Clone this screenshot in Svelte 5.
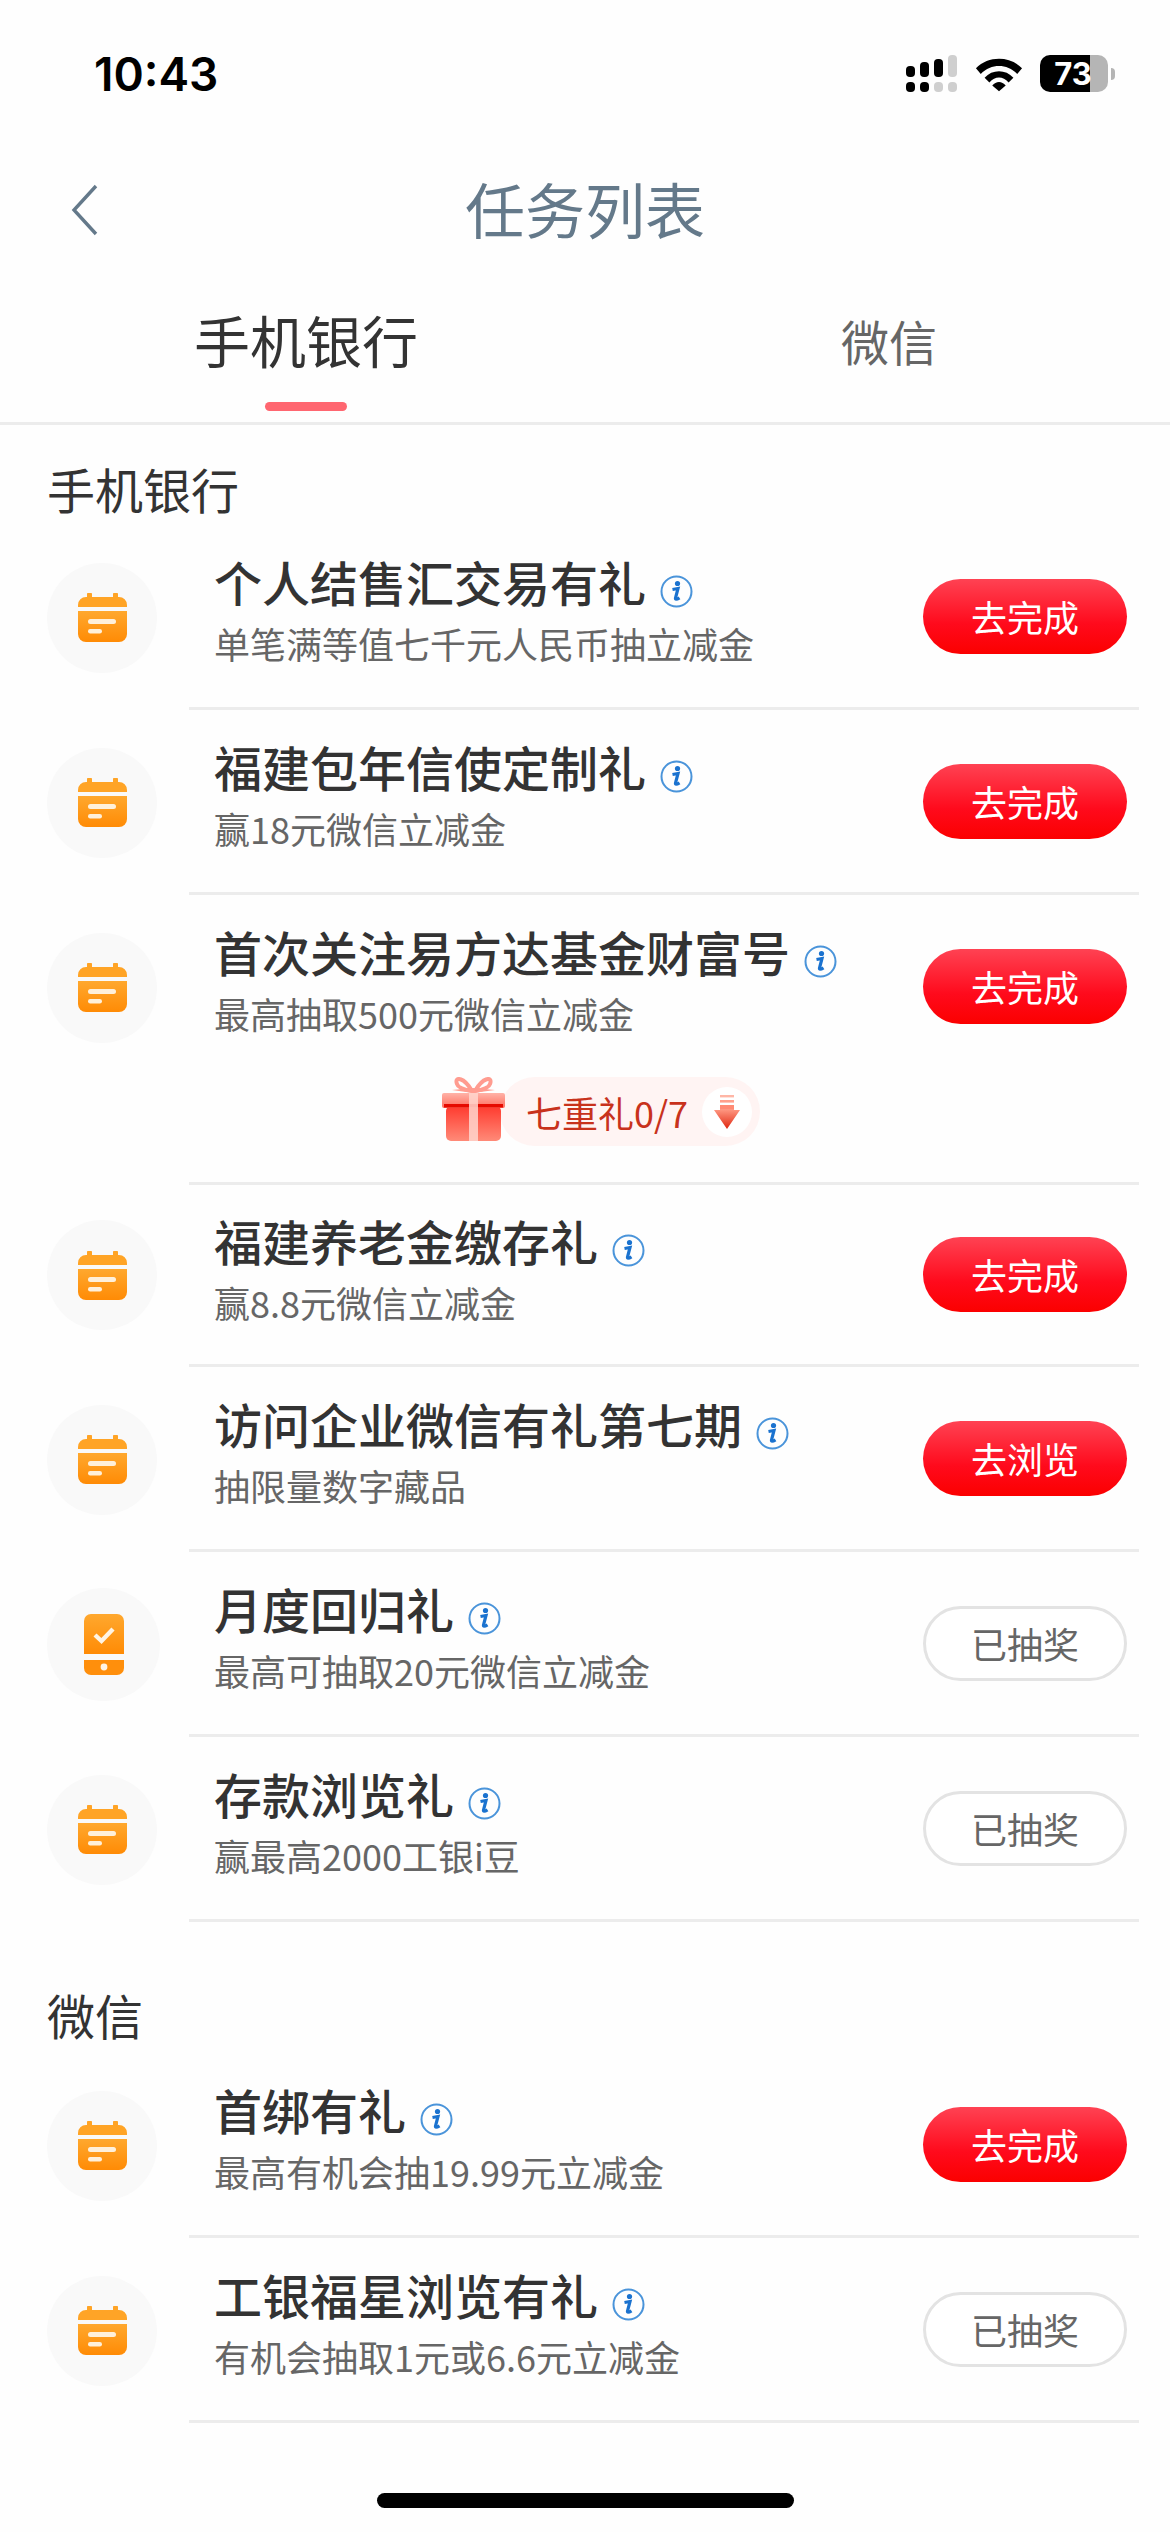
<script>
  const bank = [
    { title: '个人结售汇交易有礼', sub: '单笔满等值七千元人民币抽立减金', btn: '去完成' },
    { title: '福建包年信使定制礼', sub: '赢18元微信立减金', btn: '去完成' },
    { title: '首次关注易方达基金财富号', sub: '最高抽取500元微信立减金', btn: '去完成', gift: true },
    { title: '福建养老金缴存礼', sub: '赢8.8元微信立减金', btn: '去完成', short: true },
    { title: '访问企业微信有礼第七期', sub: '抽限量数字藏品', btn: '去浏览' },
    { title: '月度回归礼', sub: '最高可抽取20元微信立减金', btn: '已抽奖', done: true, phone: true },
    { title: '存款浏览礼', sub: '赢最高2000工银i豆', btn: '已抽奖', done: true }
  ];
  const wechat = [
    { title: '首绑有礼', sub: '最高有机会抽19.99元立减金', btn: '去完成' },
    { title: '工银福星浏览有礼', sub: '有机会抽取1元或6.6元立减金', btn: '已抽奖', done: true }
  ];
  const sections = [
    { name: '手机银行', tasks: bank },
    { name: '微信', tasks: wechat }
  ];
</script>

<svg class="defs" width="0" height="0" aria-hidden="true">
  <defs>
    <linearGradient id="orange" x1="0" y1="0" x2="0" y2="1">
      <stop offset="0" stop-color="#ffa82e" />
      <stop offset="1" stop-color="#ff8b05" />
    </linearGradient>
    <linearGradient id="giftbody" x1="0" y1="0" x2="0" y2="1">
      <stop offset="0" stop-color="#ff3a2e" />
      <stop offset="1" stop-color="#ff8a78" />
    </linearGradient>
    <linearGradient id="giftlid" x1="0" y1="0" x2="0" y2="1">
      <stop offset="0" stop-color="#ffb3a8" />
      <stop offset="1" stop-color="#ff6d5e" />
    </linearGradient>
    <linearGradient id="arrow" x1="0" y1="0" x2="0" y2="1">
      <stop offset="0" stop-color="#ff9a84" />
      <stop offset="1" stop-color="#e0260f" />
    </linearGradient>
  </defs>
</svg>

<div class="page">
  <div class="status">
    <span class="time">10:43</span>
    <div class="status-icons">
      <svg width="52" height="37" viewBox="0 0 52 37">
        <rect x="0" y="11" width="9" height="11" rx="4" />
        <rect x="14" y="7" width="9" height="15" rx="4" />
        <rect x="28" y="4" width="9" height="18" rx="4" />
        <rect x="42" y="0" width="9" height="22" rx="4" fill="#cfcfcf" />
        <rect x="0" y="27" width="9" height="10" rx="4" />
        <rect x="14" y="27" width="9" height="10" rx="4" />
        <rect x="28" y="27" width="9" height="10" rx="4" fill="#cfcfcf" />
        <rect x="42" y="27" width="9" height="10" rx="4" fill="#cfcfcf" />
      </svg>
      <svg width="48" height="37" viewBox="0 0 50 37">
        <path d="M1 13 C14 0 36 0 49 13 L44 19 C33 8 17 8 6 19 Z" />
        <path d="M10 23 C18 14 32 14 40 23 L35 28 C29 21 21 21 15 28 Z" />
        <path d="M18 31 C22 26 28 26 32 31 L25 37 Z" />
      </svg>
      <div class="battery">
        <div class="battery-body"><span>73</span></div>
        <i class="nub"></i>
      </div>
    </div>
  </div>

  <div class="nav">
    <svg class="back" width="28" height="52" viewBox="0 0 28 52">
      <path d="M25 2 L3 26 L25 50" fill="none" stroke="#64798a" stroke-width="3.4" />
    </svg>
    <h1>任务列表</h1>
  </div>

  <div class="tabs">
    <div class="tab active">手机银行<i></i></div>
    <div class="tab">微信</div>
  </div>

  {#each sections as section}
    <section>
      <h2>{section.name}</h2>
      {#each section.tasks as task}
        <div class="row" class:short={task.short}>
          <div class="icon-cell">
            <div class="icon" class:big={task.phone}>
              {#if task.phone}
                <svg width="40" height="61" viewBox="0 0 40 61">
                  <path d="M7 0 H33 A7 7 0 0 1 40 7 V40 H0 V7 A7 7 0 0 1 7 0 Z" fill="url(#orange)" />
                  <path d="M0 46 H40 V54 A7 7 0 0 1 33 61 H7 A7 7 0 0 1 0 54 Z" fill="#ff8f0c" />
                  <path d="M11 21 L17.5 27 L29 15" fill="none" stroke="#fff4e4" stroke-width="4.4" />
                  <circle cx="20" cy="53" r="3.4" fill="#fff4e4" />
                </svg>
              {:else}
                <svg width="49" height="49" viewBox="0 0 49 49">
                  <path d="M9 4 V1.5 A2 2 0 0 1 14 1.5 V4 H35 V1.5 A2 2 0 0 1 40 1.5 V4 H41 A8 8 0 0 1 49 12 V14 H0 V12 A8 8 0 0 1 8 4 Z" fill="#ffa426" />
                  <path d="M0 18 H49 V41 A8 8 0 0 1 41 49 H8 A8 8 0 0 1 0 41 Z" fill="url(#orange)" />
                  <rect x="10" y="26" width="28" height="5" rx="2.5" fill="#fff0da" />
                  <rect x="10" y="36" width="14" height="4.5" rx="2.2" fill="#fff0da" />
                </svg>
              {/if}
            </div>
          </div>
          <div class="body">
            <div class="main">
              <div class="text">
                <div class="title">
                  {task.title}
                  <svg class="info" width="33" height="33" viewBox="0 0 33 33">
                    <circle cx="16.5" cy="16.5" r="15" fill="none" stroke="#4a94da" stroke-width="2" />
                    <circle cx="17.5" cy="8.5" r="2.6" fill="#1a72cf" />
                    <path d="M12.5 14.5 L18 13.5 L15.5 23 C15.2 24.6 16.4 24.8 19.5 22.8" fill="none" stroke="#1a72cf" stroke-width="3.2" />
                  </svg>
                </div>
                <div class="sub">{task.sub}</div>
              </div>
              <button class:done={task.done}>{task.btn}</button>
            </div>
            {#if task.gift}
              <div class="gift-wrap">
                <div class="gift">
                  <svg class="box" width="63" height="64" viewBox="0 0 63 64">
                    <path d="M30 14 C22 0 12 -1 15 7 C16 11 24 13 30 14 Z M33 14 C41 0 51 -1 48 7 C47 11 39 13 33 14 Z" fill="none" stroke="#ff9c90" stroke-width="4" />
                    <path d="M10 13 L31 11 L53 13 L31 16 Z" fill="#ff9c90" />
                    <rect x="4" y="29" width="55" height="35" rx="5" fill="url(#giftbody)" />
                    <rect x="0" y="16" width="63" height="15" rx="2" fill="url(#giftlid)" />
                    <rect x="2" y="27" width="59" height="3.5" fill="#e60a00" />
                    <rect x="27" y="16" width="9" height="48" fill="#ffd6ce" opacity="0.85" />
                  </svg>
                  <span>七重礼0/7</span>
                  <div class="down">
                    <svg width="26" height="34" viewBox="0 0 26 34">
                      <rect x="6" y="0" width="14" height="2.4" fill="#ffb6a6" />
                      <rect x="6" y="5" width="14" height="2.6" fill="#ffa08c" />
                      <rect x="6" y="10" width="14" height="4" fill="#ff8a74" />
                      <path d="M6 14 H20 V15 H26 L13 34 L0 15 H6 Z" fill="url(#arrow)" />
                    </svg>
                  </div>
                </div>
              </div>
            {/if}
          </div>
        </div>
      {/each}
    </section>
  {/each}

  <div class="home"></div>
</div>

<style>
  :global(body) {
    margin: 0;
    background: #fff;
  }
  .defs {
    position: absolute;
  }
  .page {
    width: 1170px;
    height: 2532px;
    overflow: hidden;
    position: relative;
    background: #fefefe;
    font-family: "Noto Sans CJK SC", "Liberation Sans", sans-serif;
  }
  .status {
    height: 140px;
    display: flex;
    justify-content: space-between;
    box-sizing: border-box;
    padding: 46px 55px 0 94px;
  }
  .time {
    font-family: Inter, "Liberation Sans", sans-serif;
    font-weight: 600;
    font-size: 46px;
    line-height: 56px;
    color: #000;
  }
  .status-icons {
    display: flex;
    align-items: flex-start;
    gap: 17px;
    padding-top: 9px;
  }
  .battery {
    display: flex;
    align-items: center;
    gap: 3px;
  }
  .battery-body {
    width: 68px;
    height: 37px;
    border-radius: 10px;
    background: linear-gradient(90deg, #000 50px, #b5b5b5 50px);
    display: flex;
    justify-content: center;
    color: #fff;
    font-family: Inter, "Liberation Sans", sans-serif;
    font-weight: 700;
    font-size: 31px;
    line-height: 37px;
  }
  .battery-body span {
    margin-left: -2px;
  }
  .nub {
    width: 4px;
    height: 12px;
    border-radius: 0 6px 6px 0;
    background: #b5b5b5;
  }
  .nav {
    height: 140px;
    position: relative;
    display: flex;
    align-items: center;
    justify-content: center;
  }
  .back {
    position: absolute;
    left: 71px;
    top: 44px;
  }
  h1 {
    margin: 0 0 4px;
    font-size: 60px;
    font-weight: 400;
    color: #64798a;
    line-height: 136px;
  }
  .tabs {
    height: 145px;
    box-sizing: border-box;
    border-bottom: 3px solid #ececec;
    display: grid;
    grid-template-columns: 612px 1fr;
  }
  .tab {
    position: relative;
    font-size: 48px;
    color: #666;
    text-align: center;
    line-height: 120px;
    padding-right: 4px;
  }
  .tab.active {
    font-size: 56px;
    color: #333;
    line-height: 118px;
    padding-right: 0;
  }
  .tab i {
    position: absolute;
    left: 265px;
    top: 122px;
    width: 82px;
    height: 9px;
    border-radius: 5px;
    background: #ff6670;
  }
  h2 {
    margin: 0;
    padding-left: 47px;
    font-size: 48px;
    font-weight: 400;
    color: #333;
    line-height: 66px;
  }
  section:first-of-type h2 {
    padding-top: 30px;
    padding-bottom: 4px;
  }
  section + section h2 {
    padding-top: 59px;
    padding-bottom: 6px;
  }
  .row {
    display: flex;
    min-height: 185px;
  }
  .row.short {
    min-height: 182px;
  }
  .icon-cell {
    flex: 0 0 189px;
    height: 185px;
    display: flex;
    align-items: center;
  }
  .short .icon-cell {
    height: 180px;
  }
  .icon {
    margin-left: 47px;
    width: 110px;
    height: 110px;
    border-radius: 50%;
    background: #f9f9f9;
    display: flex;
    align-items: center;
    justify-content: center;
  }
  .icon.big {
    width: 113px;
    height: 113px;
  }
  .body {
    width: 950px;
    border-bottom: 3px solid #ececec;
    box-sizing: border-box;
  }
  .main {
    height: 182px;
    display: flex;
    align-items: center;
    justify-content: space-between;
    padding: 0 12px 0 25px;
    box-sizing: border-box;
  }
  .short .main {
    height: 179px;
  }
  .text {
    padding-bottom: 14px;
  }
  .title {
    display: flex;
    align-items: center;
    gap: 14px;
    font-size: 48px;
    font-weight: 500;
    color: #333;
    line-height: 62px;
  }
  .info {
    margin-top: 21px;
  }
  .sub {
    font-size: 36px;
    color: #666;
    line-height: 50px;
    margin-top: 6px;
  }
  button {
    flex: none;
    width: 204px;
    height: 75px;
    padding: 0;
    border: none;
    border-radius: 38px;
    background: linear-gradient(180deg, #ff4253 0%, #ff0a1c 60%, #fb0000 100%);
    color: #fff;
    font-family: inherit;
    font-size: 36px;
    line-height: 75px;
  }
  button.done {
    background: #fff;
    border: 3px solid #e3e3e3;
    box-sizing: border-box;
    color: #666;
    line-height: 69px;
  }
  .gift-wrap {
    height: 105px;
    display: flex;
    align-items: flex-start;
    padding-left: 253px;
  }
  .gift {
    position: relative;
    width: 260px;
    height: 69px;
    margin-left: 58px;
    border-radius: 35px;
    background: #fff4f3;
    display: flex;
    align-items: center;
    color: #c8321c;
    font-size: 36px;
  }
  .gift span {
    margin-left: 26px;
  }
  .box {
    position: absolute;
    left: -58px;
    top: 0;
  }
  .down {
    position: absolute;
    right: 8px;
    top: 10px;
    width: 50px;
    height: 50px;
    border-radius: 50%;
    background: #fff;
    display: flex;
    align-items: center;
    justify-content: center;
  }
  .home {
    position: absolute;
    left: 377px;
    top: 2493px;
    width: 417px;
    height: 15px;
    border-radius: 8px;
    background: #000;
  }
</style>
